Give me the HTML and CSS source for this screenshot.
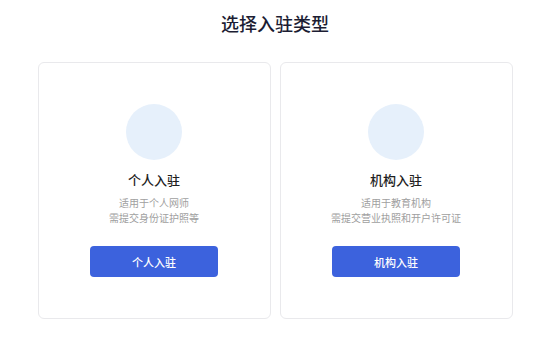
FILE: index.html
```html
<!DOCTYPE html>
<html lang="zh-CN">
<head>
<meta charset="utf-8">
<link rel="stylesheet" href="styles.css">
</head>
<body>
<div class="page">
  <h1 class="title">选择入驻类型</h1>
  <div class="cards">
    <div class="card">
      <div class="avatar"></div>
      <div class="card-title">个人入驻</div>
      <div class="desc">
        <div>适用于个人网师</div>
        <div>需提交身份证护照等</div>
      </div>
      <button class="btn">个人入驻</button>
    </div>
    <div class="card">
      <div class="avatar"></div>
      <div class="card-title">机构入驻</div>
      <div class="desc">
        <div>适用于教育机构</div>
        <div>需提交营业执照和开户许可证</div>
      </div>
      <button class="btn">机构入驻</button>
    </div>
  </div>
</div>
</body>
</html>
```
FILE: styles.css
```css
* { box-sizing: border-box; }
html, body {
  margin: 0;
  padding: 0;
  background: #ffffff;
}
body {
  font-family: "Noto Sans CJK SC", "Noto Sans", sans-serif;
  color: #1f1f1f;
}
.page {
  width: 550px;
  height: 346px;
  display: flex;
  flex-direction: column;
  align-items: center;
  padding-top: 11px;
}
.title {
  margin: 0;
  font-size: 18px;
  line-height: 24px;
  font-weight: 500;
  color: #1c1d33;
}
.cards {
  margin-top: 27px;
  display: flex;
  gap: 9px;
}
.card {
  width: 233px;
  height: 257px;
  border: 1px solid #e9e9ec;
  border-radius: 6px;
  display: flex;
  flex-direction: column;
  align-items: center;
  padding-top: 41px;
}
.avatar {
  width: 56px;
  height: 56px;
  border-radius: 50%;
  background: #e6f0fb;
}
.card-title {
  margin-top: 11px;
  font-size: 13px;
  line-height: 18px;
  font-weight: 500;
  color: #1f1f1f;
}
.desc {
  margin-top: 6px;
  font-size: 10px;
  line-height: 15px;
  color: #a0a0a0;
  text-align: center;
}
.btn {
  margin-top: 21px;
  width: 128px;
  height: 31px;
  border: none;
  border-radius: 4px;
  background: #3c62dd;
  color: #ffffff;
  font-family: "Noto Sans CJK SC", "Noto Sans", sans-serif;
  font-size: 11px;
  font-weight: 500;
  padding: 0;
}
```
